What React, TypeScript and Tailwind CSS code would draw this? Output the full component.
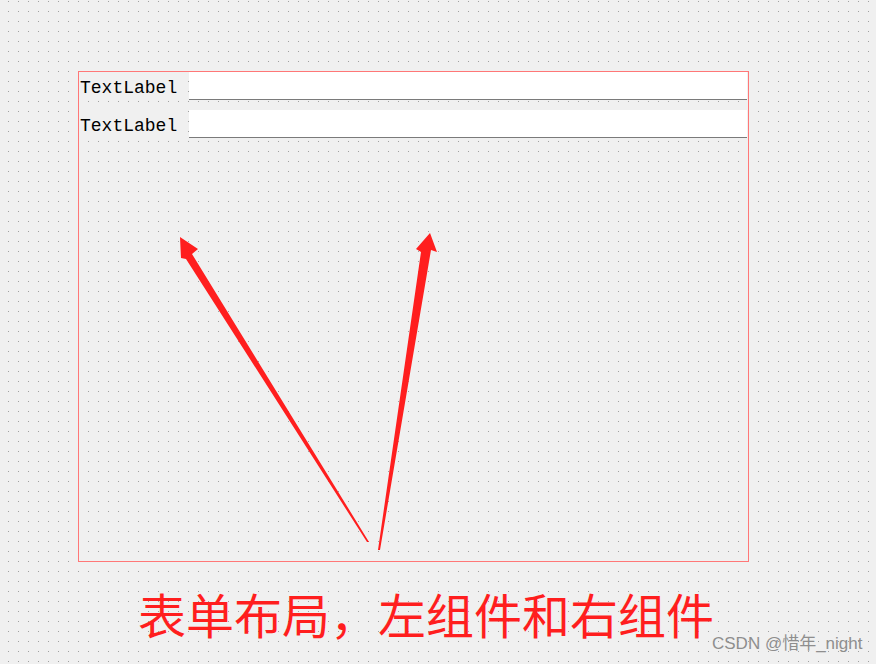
import React from "react";

function Arrows() {
  return (
    <svg className="pointer-events-none absolute left-0 top-0" width="876" height="664" viewBox="0 0 876 664">
      <polygon
        fill="#ff1e1e"
        points="180,237 198,249 192,254 369,542 367,542 186,259 181,258"
      />
      <polygon
        fill="#ff1e1e"
        points="430,233 437,252 431,250 380,550 378,550 421,252 416,249"
      />
    </svg>
  );
}

function Row() {
  return (
    <div className="flex h-[28px] items-stretch">
      <div className="flex w-[108px] items-center bg-[#f0f0f0] pl-[1px] pt-[3px] font-['Liberation_Mono',monospace] text-[18px] leading-none text-black">
        TextLabel
      </div>
      <div className="ml-[2px] mr-[1px] flex-1 border-b border-[#7a7a7a] bg-white" />
    </div>
  );
}

export default function App() {
  return (
    <div className="relative h-[664px] w-[876px] overflow-hidden bg-[#f0f0f0] bg-[linear-gradient(90deg,#f0f0f0_9px,transparent_9px),linear-gradient(#f0f0f0_9px,#a0a0a0_9px)] bg-[length:10px_10px] bg-[position:-1px_-8px]">
      <div className="flex flex-col pl-[78px] pt-[71px]">
        <div className="flex h-[491px] w-[671px] flex-col gap-[10px] border border-[#ff7777] pt-0">
          <Row />
          <Row />
        </div>
        <div className="ml-[60px] mt-[27px] font-['Noto_Sans_CJK_SC',sans-serif] text-[48px] leading-[48px] text-[#ff1e1e]">
          表单布局，左组件和右组件
        </div>
      </div>
      <Arrows />
      <div className="absolute left-[712px] top-[634px] font-['Liberation_Sans','Noto_Sans_CJK_SC',sans-serif] text-[17px] leading-[20px] text-[#8e8e8e]">
        CSDN @惜年_night
      </div>
    </div>
  );
}
